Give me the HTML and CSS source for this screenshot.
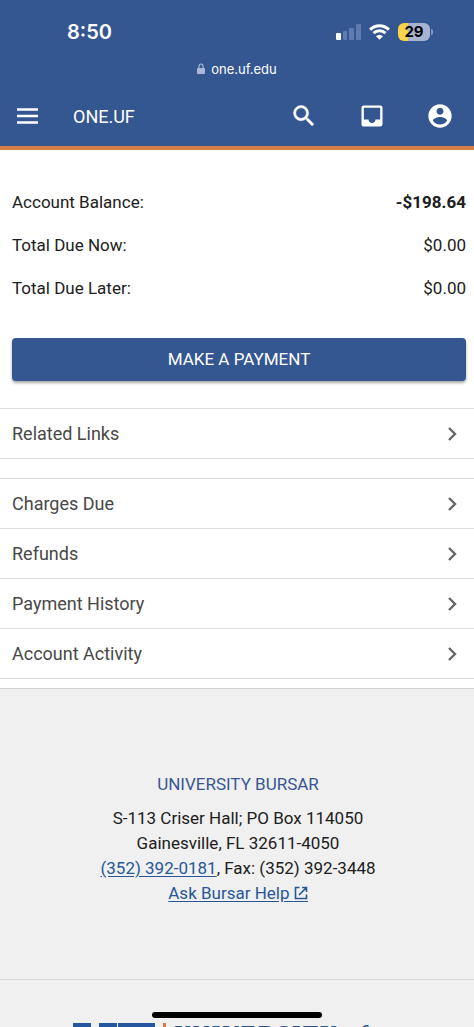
FILE: index.html
```html
<!DOCTYPE html>
<html lang="en">
<head>
<meta charset="utf-8">
<meta name="viewport" content="width=device-width, initial-scale=1">
<title>ONE.UF</title>
<link rel="stylesheet" href="styles.css">
</head>
<body>
<div class="screen">
  <header class="header">
    <div class="status">
      <span class="clock">8:50</span>
      <div class="indicators">
        <svg width="25" height="16" viewBox="0 0 25 16" aria-hidden="true">
          <rect x="0" y="9" width="5" height="7" rx="1" fill="#fff"/>
          <g fill="#5f7bb0"><rect x="7" y="7" width="4" height="9" rx="1"/><rect x="13" y="4" width="5" height="12" rx="1"/><rect x="20" y="0" width="5" height="16" rx="1"/></g>
        </svg>
        <svg width="21" height="16" viewBox="0 0 21 16" aria-hidden="true">
          <g fill="none" stroke="#fff" stroke-width="3"><path d="M1.1 5.6C6.4.3 14.6.3 19.9 5.6"/><path d="M4.5 9.2C7.9 5.9 13.1 5.9 16.5 9.2"/></g>
          <path d="M10.5 15.8 7 12.2q3.500-3 7 0z" fill="#fff"/>
        </svg>
        <span class="battery">29</span>
      </div>
    </div>
    <div class="address">
      <svg width="8" height="12" viewBox="0 0 8 12" aria-hidden="true"><path d="M2 5.500V3.300a2 2.300 0 0 1 4 0V5.500" fill="none" stroke="#aab9d8" stroke-width="1.200"/><rect x="0" y="5" width="8" height="6" rx="1" fill="#aab9d8"/></svg>
      <span>one.uf.edu</span>
    </div>
    <nav class="nav">
      <button class="icon-button" aria-label="Menu"><svg width="22" height="16" viewBox="0 0 22 16"><path d="M0 1.500h21M0 8h21M0 14.500h21" stroke="#fff" stroke-width="2.500"/></svg></button>
      <a class="brand" href="#">ONE.UF</a>
      <div class="actions">
        <button class="icon-button" aria-label="Search"><svg width="28" height="28" viewBox="0 0 24 24" fill="#fff" stroke="#fff" stroke-width="0.400"><path d="M15.500 14h-.79l-.28-.27A6.471 6.471 0 0 0 16 9.500 6.500 6.500 0 1 0 9.500 16c1.610 0 3.090-.59 4.230-1.570l.27.28v.79l5 4.990L20.490 19l-4.990-5zm-6 0C7.010 14 5 11.990 5 9.500S7.010 5 9.500 5 14 7.010 14 9.500 11.990 14 9.500 14z"/></svg></button>
        <button class="icon-button" aria-label="Inbox"><svg width="28" height="28" viewBox="0 0 24 24" fill="#fff"><path d="M19 3H5a2 2 0 0 0-2 2v14c0 1.100.9 2 2 2h14a2 2 0 0 0 2-2V5a2 2 0 0 0-2-2zm0 12h-4c0 1.660-1.350 3-3 3s-3-1.340-3-3H5V5h14v10z"/></svg></button>
        <button class="icon-button" aria-label="Profile"><svg width="28" height="28" viewBox="0 0 24 24" fill="#fff"><path d="M12 2C6.480 2 2 6.480 2 12s4.480 10 10 10 10-4.480 10-10S17.520 2 12 2zm0 3c1.660 0 3 1.340 3 3s-1.340 3-3 3-3-1.340-3-3 1.340-3 3-3zm0 14.200a7.200 7.200 0 0 1-6-3.220c.03-1.990 4-3.080 6-3.080 1.990 0 5.970 1.090 6 3.080a7.200 7.200 0 0 1-6 3.220z"/></svg></button>
      </div>
    </nav>
  </header>

  <main>
    <section class="summary">
      <dl class="totals">
        <div class="total"><dt>Account Balance:</dt><dd class="strong">-$198.64</dd></div>
        <div class="total"><dt>Total Due Now:</dt><dd>$0.00</dd></div>
        <div class="total"><dt>Total Due Later:</dt><dd>$0.00</dd></div>
      </dl>
      <button class="pay">MAKE A PAYMENT</button>
    </section>
    <div class="list">
      <button class="row">Related Links<svg class="chevron" viewBox="0 0 8 14"><path d="M1 1l6 6-6 6"/></svg></button>
    </div>
    <div class="list">
      <button class="row">Charges Due<svg class="chevron" viewBox="0 0 8 14"><path d="M1 1l6 6-6 6"/></svg></button>
      <button class="row">Refunds<svg class="chevron" viewBox="0 0 8 14"><path d="M1 1l6 6-6 6"/></svg></button>
      <button class="row">Payment History<svg class="chevron" viewBox="0 0 8 14"><path d="M1 1l6 6-6 6"/></svg></button>
      <button class="row">Account Activity<svg class="chevron" viewBox="0 0 8 14"><path d="M1 1l6 6-6 6"/></svg></button>
    </div>
  </main>

  <footer class="footer">
    <section class="contact">
      <h2 class="office">UNIVERSITY BURSAR</h2>
      <address class="details">
        S-113 Criser Hall; PO Box 114050<br>
        Gainesville, FL 32611-4050<br>
        <a href="tel:3523920181">(352) 392-0181</a>, Fax: (352) 392-3448<br>
        <a href="#">Ask Bursar Help <svg class="external" viewBox="0 0 14 16"><path d="M5.500 1.500H1.500v11h11V8.500M8 1.500h4.500V6M12.500 1.500 5 9" fill="none" stroke="currentColor" stroke-width="1.600"/><path d="M0 15.500h14" stroke="currentColor"/></svg></a>
      </address>
    </section>
    <div class="logo">
      <svg class="mark" width="82" height="48" viewBox="0 0 82 48" aria-hidden="true"><path fill="#2457a0" d="M0 0h18v8h-4v20q0 8 8 8t8-8V8h-4V0h18v8h-4v20q0 18-18 18T4 28V8H0zM45 0h37v16h-8V9H62v11h10v8H62v10h6v8H45v-8h5V8h-5z"/></svg>
      <span class="divider"></span>
      <span class="wordmark">UNIVERSITY <i>of</i></span>
    </div>
  </footer>
  <div class="home-indicator"></div>
</div>
</body>
</html>
```
FILE: styles.css
```css
* { box-sizing: border-box; }
body {
  margin: 0;
  font-family: Roboto, "Liberation Sans", sans-serif;
  color: #202020;
  background: #fff;
}
button { font: inherit; border: 0; background: none; padding: 0; }
svg { display: block; flex: none; }

.screen {
  position: relative;
  height: 100vh;
  overflow: hidden;
}

.header {
  background: #345691;
  border-bottom: 4px solid #d37f47;
  color: #fff;
}
.status {
  display: flex;
  justify-content: space-between;
  align-items: center;
  height: 60px;
  padding: 4px 44px 0 67px;
}
.clock { font: 600 20px/24px Inter, sans-serif; }
.indicators { display: flex; align-items: center; gap: 8px; }
.battery {
  position: relative;
  width: 32px;
  height: 18px;
  border-radius: 6px;
  background: linear-gradient(to right, #f6d54a 10px, #a7b4d1 10px);
  color: #000;
  font: 700 15px/18px Inter, sans-serif;
  text-align: center;
}
.battery::after {
  content: "";
  position: absolute;
  left: 33px;
  top: 6px;
  width: 2px;
  height: 6px;
  border-radius: 0 2px 2px 0;
  background: #8195bf;
}
.address {
  display: flex;
  justify-content: center;
  align-items: center;
  gap: 6px;
  height: 18px;
  font: 400 13px/18px Inter, sans-serif;
}
.nav {
  display: flex;
  align-items: center;
  height: 68px;
  padding: 8px 20px 0 17px;
}
.icon-button { color: #fff; cursor: pointer; }
.brand {
  margin-left: 34px;
  color: #fff;
  font-size: 18px;
  text-decoration: none;
}
.actions { display: flex; gap: 40px; margin-left: auto; }

.summary { padding: 31px 8px 27px 12px; }
.totals { margin: 0; }
.total {
  display: flex;
  justify-content: space-between;
  font-size: 17px;
  line-height: 43px;
}
.total dd { margin: 0; }
.total .strong { font-weight: 700; }
.pay {
  display: block;
  width: 100%;
  margin-top: 28px;
  border-radius: 4px;
  background: #345691;
  box-shadow: 0 2px 3px rgba(0, 0, 0, 0.35);
  color: #fff;
  font-size: 17px;
  line-height: 43px;
}

.list {
  margin-bottom: 19px;
  border-top: 1px solid #dedede;
}
.list:last-child { margin-bottom: 9px; }
.row {
  display: flex;
  justify-content: space-between;
  align-items: center;
  width: 100%;
  padding: 0 18px 0 12px;
  border-bottom: 1px solid #dedede;
  color: #484848;
  font-size: 18px;
  line-height: 49px;
}
.chevron {
  width: 8px;
  height: 14px;
  overflow: visible;
  fill: none;
  stroke: #666;
  stroke-width: 2.4;
}

.footer {
  border-top: 1px solid #d0d0d0;
  background: #f0f0f0;
}
.contact {
  padding: 83px 10px 73px 12px;
  border-bottom: 1px solid #d8d8d8;
  text-align: center;
}
.office {
  margin: 0 0 9px;
  color: #3a5692;
  font-size: 17px;
  font-weight: 400;
  line-height: 25px;
}
.details {
  font-size: 17px;
  font-style: normal;
  line-height: 25px;
}
.details a { color: #285797; text-underline-offset: 2px; }
.external {
  display: inline-block;
  width: 14px;
  height: 16px;
  vertical-align: -3px;
}
.logo {
  display: flex;
  justify-content: center;
  align-items: flex-start;
  gap: 8px;
  padding: 43px 32px 32px 0;
}
.divider { width: 3px; height: 48px; background: #dd7844; }
.wordmark {
  color: #2c5590;
  font: 700 23px/21px "Liberation Serif", serif;
  letter-spacing: 2px;
  white-space: nowrap;
}

.home-indicator {
  position: absolute;
  left: 50%;
  bottom: 9px;
  width: 170px;
  height: 6px;
  margin-left: -85px;
  border-radius: 3px;
  background: #000;
}
```
